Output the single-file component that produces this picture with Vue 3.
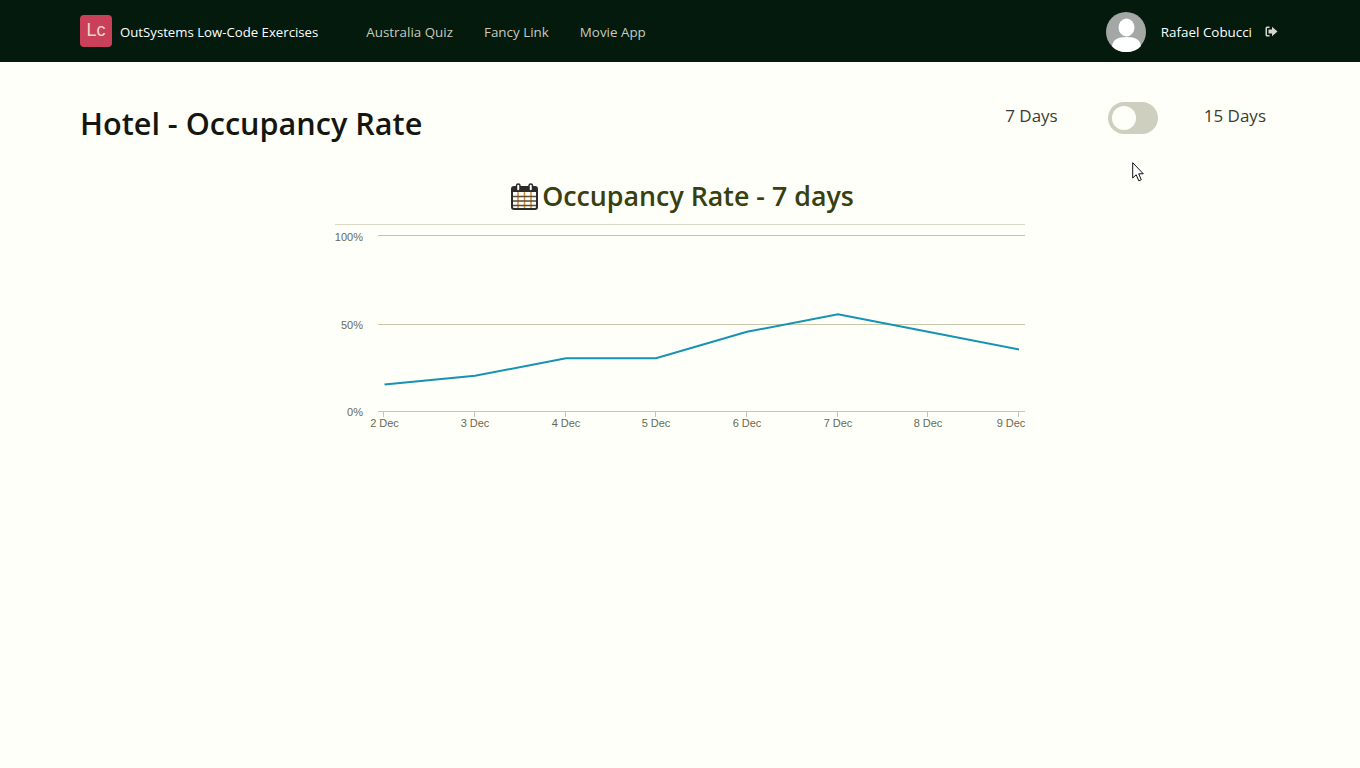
<script setup>
const links = ['Australia Quiz', 'Fancy Link', 'Movie App']
const xs = [383.5, 474, 565, 655, 746, 837, 927, 1018]
const labels = ['2 Dec', '3 Dec', '4 Dec', '5 Dec', '6 Dec', '7 Dec', '8 Dec', '9 Dec']
const vals = [15, 20, 30, 30, 45, 55, 45, 35]
const ox = 325
const oy = 215
const ticks = xs.map((x, i) => ({
  x: x - ox,
  label: labels[i],
  tx: i === xs.length - 1 ? x - ox - 7 : x - ox + 1
}))
const pts = xs.map((x, i) => `${x - ox + 1},${411 - vals[i] * 1.76 - oy}`).join(' ')
</script>

<template>
  <div class="page">
    <header class="bar">
      <div class="logo">Lc</div>
      <div class="brand">OutSystems Low-Code Exercises</div>
      <nav class="nav">
        <a v-for="l in links" :key="l">{{ l }}</a>
      </nav>
      <div class="user">
        <svg class="avatar" viewBox="0 0 40 40" width="40" height="40">
          <circle cx="20" cy="20" r="20" fill="#a3a7a6" />
          <ellipse cx="20.5" cy="15.5" rx="8" ry="9" fill="#fff" />
          <path d="M6 34c1-6 5-9 14.500-9S34 28 35 34c-3.500 4-8.500 6-14.500 6S9 38 6 34z" fill="#fff" />
        </svg>
        <span class="uname">Rafael Cobucci</span>
        <svg class="logout" viewBox="0 0 13 11" width="13" height="11">
          <path d="M4.500 0.500H2Q0.500 0.500 0.500 2V9Q0.500 10.500 2 10.500H4.500V9H2.500Q2 9 2 8.500V2.500Q2 2 2.500 2H4.500Z" fill="#d6d6d0" />
          <path d="M3.500 3.500H7V0.800L12.500 5.500L7 10.200V7.500H3.500Z" fill="#d6d6d0" />
        </svg>
      </div>
    </header>
    <main class="main">
      <div class="top">
        <h1 class="title">Hotel - Occupancy Rate</h1>
        <div class="switcher">
          <span class="opt">7 Days</span>
          <span class="toggle"><span class="knob"></span></span>
          <span class="opt">15 Days</span>
        </div>
      </div>
      <h2 class="chart-title">
        <svg class="cal" viewBox="0 0 27 27" width="27" height="27">
          <rect x="1" y="4" width="25" height="22" rx="2" fill="#fff" stroke="#2d2a2a" stroke-width="2" />
          <rect x="1" y="4" width="25" height="5" fill="#2d2a2a" />
          <path d="M7 9v16M13.500 9v16M20 9v16" stroke="#c98f2c" stroke-width="1.500" />
          <path d="M2 13.500h23M2 18h23M2 22.500h23" stroke="#5d4a34" stroke-width="1.300" />
          <rect x="5.500" y="1" width="3.500" height="7" rx="1.700" fill="#fff" stroke="#2d2a2a" stroke-width="1.500" />
          <rect x="18" y="1" width="3.500" height="7" rx="1.700" fill="#fff" stroke="#2d2a2a" stroke-width="1.500" />
        </svg>
        <span>Occupancy Rate - 7 days</span>
      </h2>
      <div class="chart">
        <svg viewBox="0 0 710 225" width="710" height="225">
          <g shape-rendering="crispEdges" stroke-width="1">
            <line x1="10" x2="700" y1="9.500" y2="9.500" stroke="#d8d8c4" />
            <line x1="53" x2="700" y1="20.500" y2="20.500" stroke="#c4c4ac" />
            <line x1="53" x2="700" y1="109.500" y2="109.500" stroke="#c8c8a8" />
            <line x1="53" x2="700" y1="196.500" y2="196.500" stroke="#c4c4b8" />
            <line v-for="t in ticks" :key="t.label" :x1="t.x" :x2="t.x" y1="196" y2="202" stroke="#c4c4b8" />
          </g>
          <g class="ylab" text-anchor="end">
            <text x="38" y="26">100%</text>
            <text x="38" y="114">50%</text>
            <text x="38" y="201">0%</text>
          </g>
          <text v-for="t in ticks" :key="t.label" class="xlab" :x="t.tx" y="212" text-anchor="middle">{{ t.label }}</text>
          <polyline :points="pts" fill="none" stroke="#1592b4" stroke-width="2" />
        </svg>
      </div>
    </main>
    <svg class="cursor" viewBox="0 0 13 20" width="13" height="20">
      <path d="M0.700 0.700V16L4.200 12.800L6.800 18.800L9.300 17.700L6.700 11.800H11.300Z" fill="#fff" stroke="#111" stroke-width="1" />
    </svg>
  </div>
</template>

<style>
html, body { margin: 0; background: #fffffa; }
</style>

<style scoped>
.page {
  position: relative;
  min-height: 768px;
  background: #fffffa;
  font-family: "Open Sans", "Noto Sans", sans-serif;
  overflow: hidden;
}
.bar {
  height: 62px;
  background: #031a0c;
  display: flex;
  align-items: center;
  padding: 0 82px 0 80px;
}
.logo {
  width: 32px;
  height: 32px;
  border-radius: 4px;
  background: #c9405a;
  color: #f4d6c8;
  font: 18px/30px "Liberation Sans", sans-serif;
  text-align: center;
}
.brand, .nav a, .uname {
  position: relative;
  top: 1px;
}
.brand {
  color: #fff;
  font-size: 13.200px;
  margin-left: 8px;
}
.nav {
  display: flex;
  gap: 31px;
  margin-left: 48px;
}
.nav a {
  color: #c9c9bf;
  font-size: 13.400px;
}
.user {
  margin-left: auto;
  display: flex;
  align-items: center;
}
.avatar {
  display: block;
  margin-top: 2px;
}
.uname {
  color: #fff;
  font-size: 13.400px;
  margin-left: 15px;
}
.logout { margin-left: 13px; }
.main { padding: 0 80px; }
.top {
  display: flex;
  justify-content: space-between;
  align-items: flex-start;
  padding-top: 39px;
}
.title {
  margin: 0;
  color: #14160f;
  font-size: 30.600px;
  font-weight: 600;
  line-height: 44px;
}
.switcher {
  display: flex;
  align-items: center;
  height: 28px;
  margin: 1px 14px 0 0;
}
.opt {
  color: #3a3d30;
  font-size: 17px;
  position: relative;
  top: -1px;
}
.toggle {
  width: 50px;
  height: 32px;
  border-radius: 16px;
  background: #cfcfc0;
  margin: 4px 46px 0 50px;
  display: flex;
  align-items: center;
  padding-left: 4px;
  box-sizing: border-box;
}
.knob {
  width: 24px;
  height: 24px;
  border-radius: 50%;
  background: #fffffa;
}
.chart-title {
  margin: 33px 0 0;
  display: flex;
  justify-content: center;
  align-items: center;
  gap: 4px;
  color: #37400e;
  font-size: 26.800px;
  font-weight: 600;
  line-height: 36px;
  padding-left: 5px;
}
.chart-title .cal { display: block; }
.chart {
  margin: 1px 0 0 245px;
  width: 710px;
}
.chart svg { display: block; }
.ylab, .xlab {
  font: 11px "Liberation Sans", sans-serif;
  fill: #666a50;
}
.cursor {
  position: absolute;
  left: 1132px;
  top: 162px;
}
</style>
